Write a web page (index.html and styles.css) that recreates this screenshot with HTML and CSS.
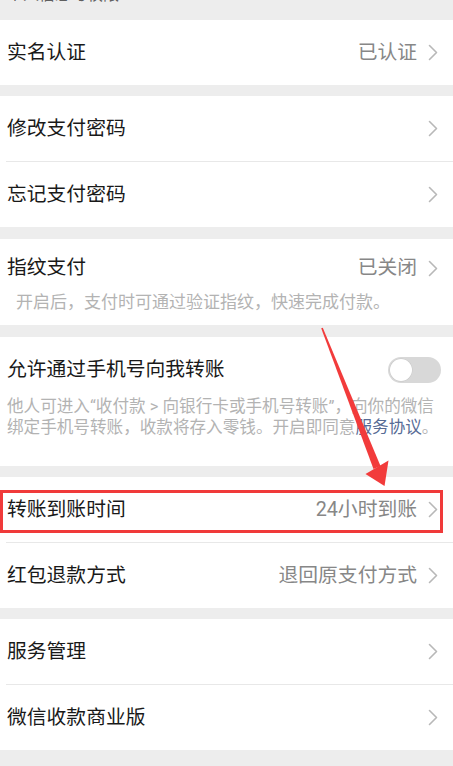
FILE: index.html
```html
<!DOCTYPE html>
<html lang="zh-CN">
<head>
<meta charset="utf-8">
<title>支付设置</title>
<link rel="stylesheet" href="styles.css">
</head>
<body>
<div class="page">
  <div class="top-band"><div class="cut-label">个人信息与权限</div></div>

  <section class="group">
    <div class="cell">
      <span class="cell-title">实名认证</span>
      <span class="cell-value">已认证</span>
      <svg class="chevron" viewBox="0 0 10 17" width="10" height="17"><polyline points="1.5,1.5 8.5,8.5 1.5,15.5"/></svg>
    </div>
  </section>

  <section class="group group-spaced">
    <div class="cell">
      <span class="cell-title">修改支付密码</span>
      <svg class="chevron" viewBox="0 0 10 17" width="10" height="17"><polyline points="1.5,1.5 8.5,8.5 1.5,15.5"/></svg>
    </div>
    <div class="divider"></div>
    <div class="cell">
      <span class="cell-title">忘记支付密码</span>
      <svg class="chevron" viewBox="0 0 10 17" width="10" height="17"><polyline points="1.5,1.5 8.5,8.5 1.5,15.5"/></svg>
    </div>
  </section>

  <section class="group group-spaced group-note">
    <div class="note-row">
      <span class="cell-title">指纹支付</span>
      <span class="cell-value">已关闭</span>
      <svg class="chevron" viewBox="0 0 10 17" width="10" height="17"><polyline points="1.5,1.5 8.5,8.5 1.5,15.5"/></svg>
    </div>
    <p class="note note-indent">开启后，支付时可通过验证指纹，快速完成付款。</p>
  </section>

  <section class="group group-switch">
    <div class="note-row">
      <span class="cell-title">允许通过手机号向我转账</span>
      <span class="switch"><span class="knob"></span></span>
    </div>
    <p class="note note-wrap">他人可进入“收付款 &gt; 向银行卡或手机号转账”，向你的微信<br>绑定手机号转账，收款将存入零钱。开启即同意<a class="link">服务协议</a>。</p>
  </section>

  <section class="group">
    <div class="cell cell-marked">
      <span class="cell-title">转账到账时间</span>
      <span class="cell-value">24小时到账</span>
      <svg class="chevron" viewBox="0 0 10 17" width="10" height="17"><polyline points="1.5,1.5 8.5,8.5 1.5,15.5"/></svg>
      <span class="mark-box"></span>
    </div>
    <div class="divider"></div>
    <div class="cell">
      <span class="cell-title">红包退款方式</span>
      <span class="cell-value">退回原支付方式</span>
      <svg class="chevron" viewBox="0 0 10 17" width="10" height="17"><polyline points="1.5,1.5 8.5,8.5 1.5,15.5"/></svg>
    </div>
  </section>

  <section class="group">
    <div class="cell">
      <span class="cell-title">服务管理</span>
      <svg class="chevron" viewBox="0 0 10 17" width="10" height="17"><polyline points="1.5,1.5 8.5,8.5 1.5,15.5"/></svg>
    </div>
    <div class="divider"></div>
    <div class="cell">
      <span class="cell-title">微信收款商业版</span>
      <svg class="chevron" viewBox="0 0 10 17" width="10" height="17"><polyline points="1.5,1.5 8.5,8.5 1.5,15.5"/></svg>
    </div>
  </section>

  <svg class="arrow-overlay" viewBox="0 0 453 766" width="453" height="766">
    <polygon points="321.2,328.3 322.8,327.7 380.5,466.1 373.5,468.9"/>
    <polygon points="365.5,474 388.5,460.5 384.5,486"/>
  </svg>
</div>
</body>
</html>
```

FILE: styles.css
```css
html, body {
  margin: 0;
  padding: 0;
}

body {
  background: #ededed;
  font-family: "Roboto", "Noto Sans CJK SC", sans-serif;
  color: #191919;
  overflow: hidden;
}

.page {
  position: relative;
  width: 453px;
  height: 766px;
}

.top-band {
  height: 20px;
  overflow: hidden;
}

.cut-label {
  margin-top: -15px;
  padding-left: 7px;
  font-size: 16px;
  line-height: 20px;
  color: #5f5f5f;
}

.group {
  background: #ffffff;
  margin-bottom: 11px;
}

.group-spaced {
  margin-bottom: 12px;
}

.cell {
  display: flex;
  align-items: center;
  height: 65px;
  padding: 0 15px 0 7px;
}

.cell-marked {
  position: relative;
}

.note-row {
  display: flex;
  align-items: center;
  height: 26px;
  padding: 0 15px 0 7px;
}

.cell-title {
  flex: 1;
  font-size: 19.8px;
  line-height: 26px;
  white-space: nowrap;
}

.cell-value {
  font-size: 19.8px;
  line-height: 26px;
  color: #878787;
  margin-right: 11px;
  white-space: nowrap;
}

.chevron {
  display: block;
  flex: none;
}

.chevron polyline {
  fill: none;
  stroke: #b8b8b8;
  stroke-width: 1.6;
  stroke-linecap: round;
  stroke-linejoin: round;
}

.divider {
  height: 1px;
  margin-left: 6px;
  background: #e8e8e8;
}

.group-note {
  padding: 16px 0 12px;
}

.note {
  margin: 0;
  color: #b3b3b3;
}

.note-indent {
  margin-top: 10px;
  padding-left: 16px;
  font-size: 17px;
  line-height: 22px;
}

.group-switch {
  padding: 20px 0 28px;
}

.group-switch .note-row {
  padding-right: 12px;
}

.note-wrap {
  margin-top: 13px;
  padding: 0 0 0 7px;
  font-size: 16.6px;
  line-height: 21px;
  white-space: nowrap;
}

.link {
  color: #576b95;
}

.switch {
  flex: none;
  box-sizing: border-box;
  width: 53px;
  height: 26px;
  border-radius: 13px;
  background: #d8d8d8;
  padding: 2px;
  display: flex;
  align-items: center;
}

.knob {
  width: 22px;
  height: 22px;
  border-radius: 50%;
  background: #ffffff;
  box-shadow: 0 0 0 0.5px #c8c8c8;
}

.mark-box {
  position: absolute;
  left: 0;
  top: 13px;
  width: 443px;
  height: 43px;
  box-sizing: border-box;
  border: 3px solid #f03a3a;
}

.arrow-overlay {
  position: absolute;
  left: 0;
  top: 0;
  pointer-events: none;
}

.arrow-overlay polygon {
  fill: #f23b3b;
}
```
